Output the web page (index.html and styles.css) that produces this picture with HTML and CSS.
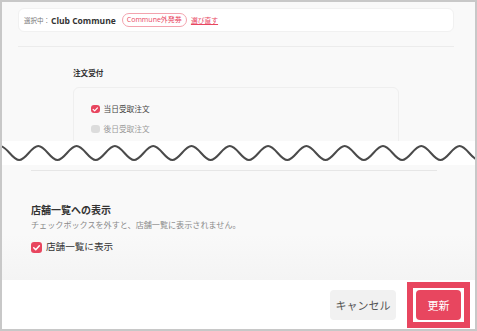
FILE: index.html
```html
<!DOCTYPE html>
<html lang="ja">
<head>
  <meta charset="UTF-8" />
  <meta name="viewport" content="width=device-width, initial-scale=1" />
  <title>店舗設定</title>
  <link rel="stylesheet" href="styles.css">
</head>
<body>
  <div class="frame">
    <div class="top">
      <div class="selected-card">
        <span class="selected-label">選択中：</span>
        <span class="club-name">Club Commune</span>
        <span class="badge">Commune外発券</span>
        <a class="reselect" href="#">選び直す</a>
      </div>
      <div class="divider"></div>
      <div class="order-title">注文受付</div>
      <div class="order-box">
        <div class="order-row">
          <span class="check small on">
            <svg viewBox="0 0 10 10"><path d="M2.5 5.2 L4.3 7 L7.6 3.4" /></svg>
          </span>
          当日受取注文
        </div>
        <div class="order-row off">
          <span class="check small"></span>
          後日受取注文
        </div>
      </div>
    </div>

    <div class="wave">
      <svg width="473" height="24" viewBox="0 0 473 24">
        <path d="M-2,5 c6.97,0 12.18,14 19.15,14 s12.18,-14 19.15,-14 s12.18,14 19.15,14 s12.18,-14 19.15,-14 s12.18,14 19.15,14 s12.18,-14 19.15,-14 s12.18,14 19.15,14 s12.18,-14 19.15,-14 s12.18,14 19.15,14 s12.18,-14 19.15,-14 s12.18,14 19.15,14 s12.18,-14 19.15,-14 s12.18,14 19.15,14 s12.18,-14 19.15,-14 s12.18,14 19.15,14 s12.18,-14 19.15,-14 s12.18,14 19.15,14 s12.18,-14 19.15,-14 s12.18,14 19.15,14 s12.18,-14 19.15,-14 s12.18,14 19.15,14 s12.18,-14 19.15,-14 s12.18,14 19.15,14 s12.18,-14 19.15,-14 s12.18,14 19.15,14" />
      </svg>
    </div>

    <div class="lower">
      <div class="divider lower-divider"></div>
      <div class="list-title">店舗一覧への表示</div>
      <div class="list-desc">チェックボックスを外すと、店舗一覧に表示されません。</div>
      <div class="list-row">
        <span class="check on">
          <svg viewBox="0 0 10 10"><path d="M2.5 5.2 L4.3 7 L7.6 3.4" /></svg>
        </span>
        店舗一覧に表示
      </div>
    </div>

    <div class="footer">
      <button class="btn-cancel">キャンセル</button>
      <span class="highlight">
        <button class="btn-update">更新</button>
      </span>
    </div>
  </div>
</body>
</html>
```

FILE: styles.css
```css
:root {
  --red: #e8465f;
  --bg: #f9f9f9;
  --text: #333;
  --subtle: #8a8a8a;
  --line: #ececec;
}

* {
  box-sizing: border-box;
  margin: 0;
  padding: 0;
}

body {
  font-family: 'Open Sans', 'Noto Sans CJK JP', sans-serif;
  color: var(--text);
  background: #fff;
}

.frame {
  width: 477px;
  height: 331px;
  border: 2px solid #c8c8c8;
  display: flex;
  flex-direction: column;
  overflow: hidden;
}

/* upper part */
.top {
  height: 139px;
  flex: none;
  background: var(--bg);
  padding: 6px 21px 0 16px;
  overflow: hidden;
}

.selected-card {
  height: 24px;
  background: #fff;
  border: 1px solid #f1f1f1;
  border-radius: 6px;
  display: flex;
  align-items: center;
  padding-left: 5px;
}

.selected-label {
  font-size: 6.5px;
  color: #777;
}

.club-name {
  font-size: 8.5px;
  font-weight: 700;
  color: #333;
  margin-left: 1px;
}

.badge {
  font-size: 7px;
  color: var(--red);
  border: 1px solid #f3a3ae;
  border-radius: 8px;
  height: 14px;
  line-height: 12px;
  padding: 0 4px;
  margin-left: 6px;
}

.reselect {
  font-size: 6.8px;
  color: var(--red);
  margin-left: 4px;
}

.divider {
  height: 1px;
  background: var(--line);
  margin-top: 14px;
}

.order-title {
  font-size: 7.6px;
  font-weight: 700;
  line-height: 12px;
  margin: 20px 0 0 55px;
}

.order-box {
  margin: 8px 55px 0 55px;
  height: 80px;
  border: 1px solid #efefef;
  border-radius: 6px;
  padding: 15px 0 0 17px;
}

.order-row {
  display: flex;
  align-items: center;
  gap: 4px;
  font-size: 7.7px;
  line-height: 12px;
  color: #444;
  margin-bottom: 8px;
}

.order-row.off {
  color: #999;
}

.check {
  width: 11px;
  height: 11px;
  border-radius: 3px;
  background: #dcdcdc;
  display: inline-flex;
  flex: none;
}

.check.small {
  width: 8.5px;
  height: 8.5px;
  border-radius: 3px;
}

.check.on {
  background: var(--red);
}

.check svg {
  width: 100%;
  height: 100%;
}

.check path {
  fill: none;
  stroke: #fff;
  stroke-width: 1.4;
  stroke-linecap: round;
  stroke-linejoin: round;
}

/* cut marker */
.wave {
  height: 24px;
  flex: none;
  background: #fff;
}

.wave svg {
  display: block;
}

.wave path {
  fill: none;
  stroke: #4a4a4a;
  stroke-width: 2;
}

/* lower part */
.lower {
  height: 115px;
  flex: none;
  background: linear-gradient(#f9f9f9 60%, #f4f4f4);
  padding-left: 29px;
}

.lower-divider {
  margin: 5px 38px 0 0;
  background: #e6e6e6;
}

.list-title {
  font-size: 10px;
  font-weight: 700;
  line-height: 14px;
  margin-top: 32px;
}

.list-desc {
  font-size: 8.1px;
  line-height: 12px;
  color: var(--subtle);
  margin-top: 2px;
}

.list-row {
  display: flex;
  align-items: center;
  gap: 4px;
  font-size: 9.6px;
  line-height: 14px;
  margin-top: 9px;
  color: #333;
}

/* footer */
.footer {
  flex: 1;
  background: #fff;
  display: flex;
  justify-content: flex-end;
  align-items: center;
  padding-right: 5px;
}

.footer button {
  font-family: inherit;
  border: none;
  height: 30px;
  border-radius: 4px;
  font-size: 11px;
  cursor: pointer;
}

.btn-cancel {
  width: 66px;
  background: #f1f1f1;
  color: #555;
  margin-right: 11px;
}

.highlight {
  display: flex;
  padding: 2px 3px;
  background: #fff;
  border: 6px solid var(--red);
}

.btn-update {
  width: 45px;
  background: var(--red);
  color: #fff;
}
```
